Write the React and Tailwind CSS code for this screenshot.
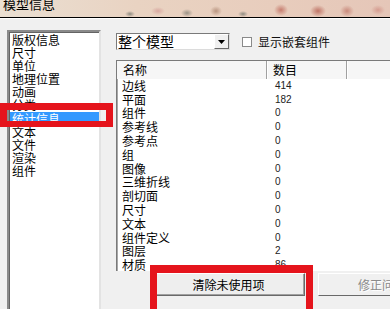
export default function App() {
  const left = ['版权信息', '尺寸', '单位', '地理位置', '动画', '分类', '统计信息', '文本', '文件', '渲染', '组件'];
  const rows = [
    ['边线', '414'], ['平面', '182'], ['组件', '0'], ['参考线', '0'], ['参考点', '0'], ['组', '0'],
    ['图像', '0'], ['三维折线', '0'], ['剖切面', '0'], ['尺寸', '0'], ['文本', '0'], ['组件定义', '0'],
    ['图层', '2'], ['材质', '86'],
  ];
  return (
    <div className="relative w-[390px] h-[309px] overflow-hidden bg-[#f0f0f0] font-['Noto_Sans_CJK_SC',sans-serif] text-black">
      {/* title bar */}
      <div className="h-[18px] border-b border-black overflow-hidden bg-[image:radial-gradient(ellipse_5px_3px_at_130px_14px,#8e8a80,transparent),radial-gradient(ellipse_7px_4px_at_158px_11px,#d8a8a0,transparent),radial-gradient(ellipse_6px_4px_at_187px_13px,#9a9286,transparent),radial-gradient(ellipse_6px_5px_at_216px_11px,#b99580,transparent),radial-gradient(ellipse_5px_3px_at_243px_14px,#8e8a80,transparent),radial-gradient(ellipse_7px_6px_at_281px_10px,#c67c6e,transparent),radial-gradient(ellipse_8px_6px_at_318px_11px,#bf7466,transparent),radial-gradient(ellipse_7px_6px_at_347px_11px,#c98a7c,transparent),radial-gradient(ellipse_7px_5px_at_378px_10px,#d59c90,transparent),linear-gradient(90deg,#eadfd2,#e9d3c2_35%,#e8cdbd_70%,#e5c6b8)]">
        <div className="text-[13px] leading-[13px] pl-[3px] -mt-[3px]">模型信息</div>
      </div>
      <div className="h-px bg-white" />

      <div className="flex">
        {/* left list */}
        <div className="ml-[7px] mt-[11px] w-[94px] h-[300px] shrink-0 bg-white border-2 border-t-[#8a8a8a] border-l-[#8a8a8a] border-r-[#e3e3e3] border-b-white shadow-[inset_1px_1px_0_#646464]">
          <div className="pt-[1px] pl-[1px] text-[12px]">
            {left.map((t, i) => (
              <div
                key={t}
                className={
                  i === 6
                    ? 'h-[13.1px] leading-[13.1px] pl-[2px] bg-[#3399ff] text-white'
                    : 'h-[13.1px] leading-[13.1px] pl-[2px]'
                }
              >
                {t}
              </div>
            ))}
          </div>
        </div>

        {/* right column */}
        <div className="ml-[15px] mt-[14px] flex flex-col">
          <div className="flex items-center h-[17px]">
            <div className="w-[114px] h-[17px] flex bg-white border border-t-[#7a7a7a] border-l-[#7a7a7a] border-r-[#dcdcdc] border-b-[#dcdcdc]">
              <div className="flex-1 text-[14px] leading-[15px] pl-[1px]">整个模型</div>
              <div className="w-[15px] h-[15px] bg-[#f0f0f0] border border-t-white border-l-white border-r-[#696969] border-b-[#696969] flex items-center justify-center">
                <svg width="7" height="4" viewBox="0 0 7 4">
                  <path d="M0 0H7L3.5 4Z" fill="#000" />
                </svg>
              </div>
            </div>
            <div className="ml-[12px] w-[10px] h-[10px] bg-white border border-[#8a8a8a]" />
            <div className="ml-[6px] text-[12px] leading-[14px] text-[#111]">显示嵌套组件</div>
          </div>

          {/* list view */}
          <div className="mt-[10px] w-[300px] h-[211px] overflow-hidden bg-white border-t border-l border-[#7a7a7a] shadow-[inset_1px_1px_0_#a8a8a8]">
            <div className="flex h-[18px] bg-[#f6f6f6] text-[12px] leading-[18px]">
              <div className="w-[150px] pl-[6px] border-r border-[#a0a0a0] shadow-[1px_0_0_#fff]">名称</div>
              <div className="w-[80px] pl-[6px] border-r border-[#a0a0a0] shadow-[1px_0_0_#fff]">数目</div>
              <div className="flex-1" />
            </div>
            {rows.map(([n, v]) => (
              <div key={n} className="flex h-[13.8px] items-center">
                <div className="w-[150px] pl-[5px] text-[12px] leading-none">{n}</div>
                <div className="pl-[8px] text-[10px] leading-none font-['Liberation_Sans',sans-serif] text-[#222]">{v}</div>
              </div>
            ))}
          </div>

          {/* buttons */}
          <div className="mt-[2px] ml-[36px] flex gap-[13px]">
            <div className="w-[153px] h-[23px] shrink-0 bg-[#eeeeee] border border-t-white border-l-white border-r-[#696969] border-b-[#696969] shadow-[inset_-1px_-1px_0_#a0a0a0] flex items-center justify-center text-[12px]">
              清除未使用项
            </div>
            <div className="w-[128px] h-[23px] shrink-0 bg-[#f0f0f0] border border-t-white border-l-white border-r-[#696969] border-b-[#696969] flex items-center justify-center text-[12px] text-[#8a8a8a] [text-shadow:1px_1px_0_#fff]">
              修正问题
            </div>
          </div>
        </div>
      </div>

      {/* red highlight boxes */}
      <div className="absolute left-0 top-[103px] w-[113px] h-[24px] border-[7px] border-b-[6px] border-[#e5141c]" />
      <div className="absolute left-[150px] top-[265px] w-[163px] h-[60px] border-[7px] border-t-[8px] border-[#e5141c]" />
    </div>
  );
}
